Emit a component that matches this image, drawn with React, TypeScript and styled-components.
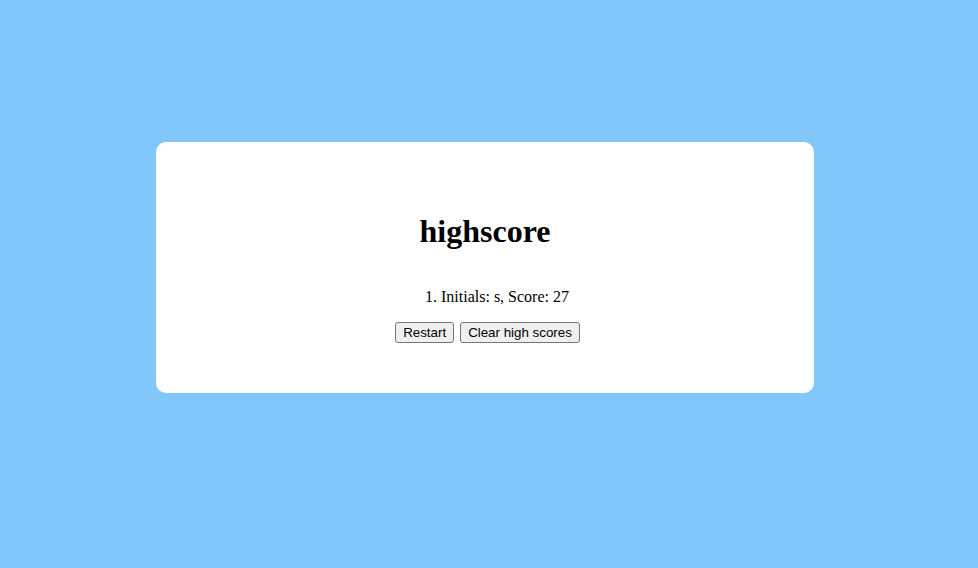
import React from "react";
import styled, { createGlobalStyle } from "styled-components";

const Global = createGlobalStyle`
  html, body { margin: 0; padding: 0; }
  body {
    background: #81c7f9;
    font-family: "Liberation Serif", "Times New Roman", serif;
    min-height: 568px;
  }
`;

const Page = styled.div`
  padding-top: 142px;
  padding-left: 156px;
`;

const Card = styled.section`
  width: 658px;
  box-sizing: border-box;
  background: #ffffff;
  border-radius: 10px;
  padding: 50px 0;
  display: flex;
  flex-direction: column;
  align-items: stretch;
  text-align: center;
`;

const Title = styled.h1`
  font-size: 32px;
  font-weight: bold;
  line-height: 37px;
  margin: 21.44px 0;
  color: #000;
`;

const ScoreList = styled.ol`
  margin: 16px 0;
  padding-left: 24px;
  list-style-position: inside;
  font-size: 16px;
  line-height: 18px;
  color: #000;
`;

const Actions = styled.div`
  display: flex;
  justify-content: center;
  gap: 6px;
  padding-left: 5px;
`;

const Button = styled.button`
  font-family: "Liberation Sans", Arial, sans-serif;
  font-size: 13.33px;
  line-height: 15px;
  height: 21px;
  padding: 1px 7px;
  background: #efefef;
  color: #000;
  border: 1px solid #767676;
  border-radius: 3px;
  box-sizing: border-box;
`;

export default function App() {
  return (
    <>
      <Global />
      <Page>
        <Card>
          <Title>highscore</Title>
          <ScoreList>
            <li>Initials: s, Score: 27</li>
          </ScoreList>
          <Actions>
            <Button>Restart</Button>
            <Button>Clear high scores</Button>
          </Actions>
        </Card>
      </Page>
    </>
  );
}
